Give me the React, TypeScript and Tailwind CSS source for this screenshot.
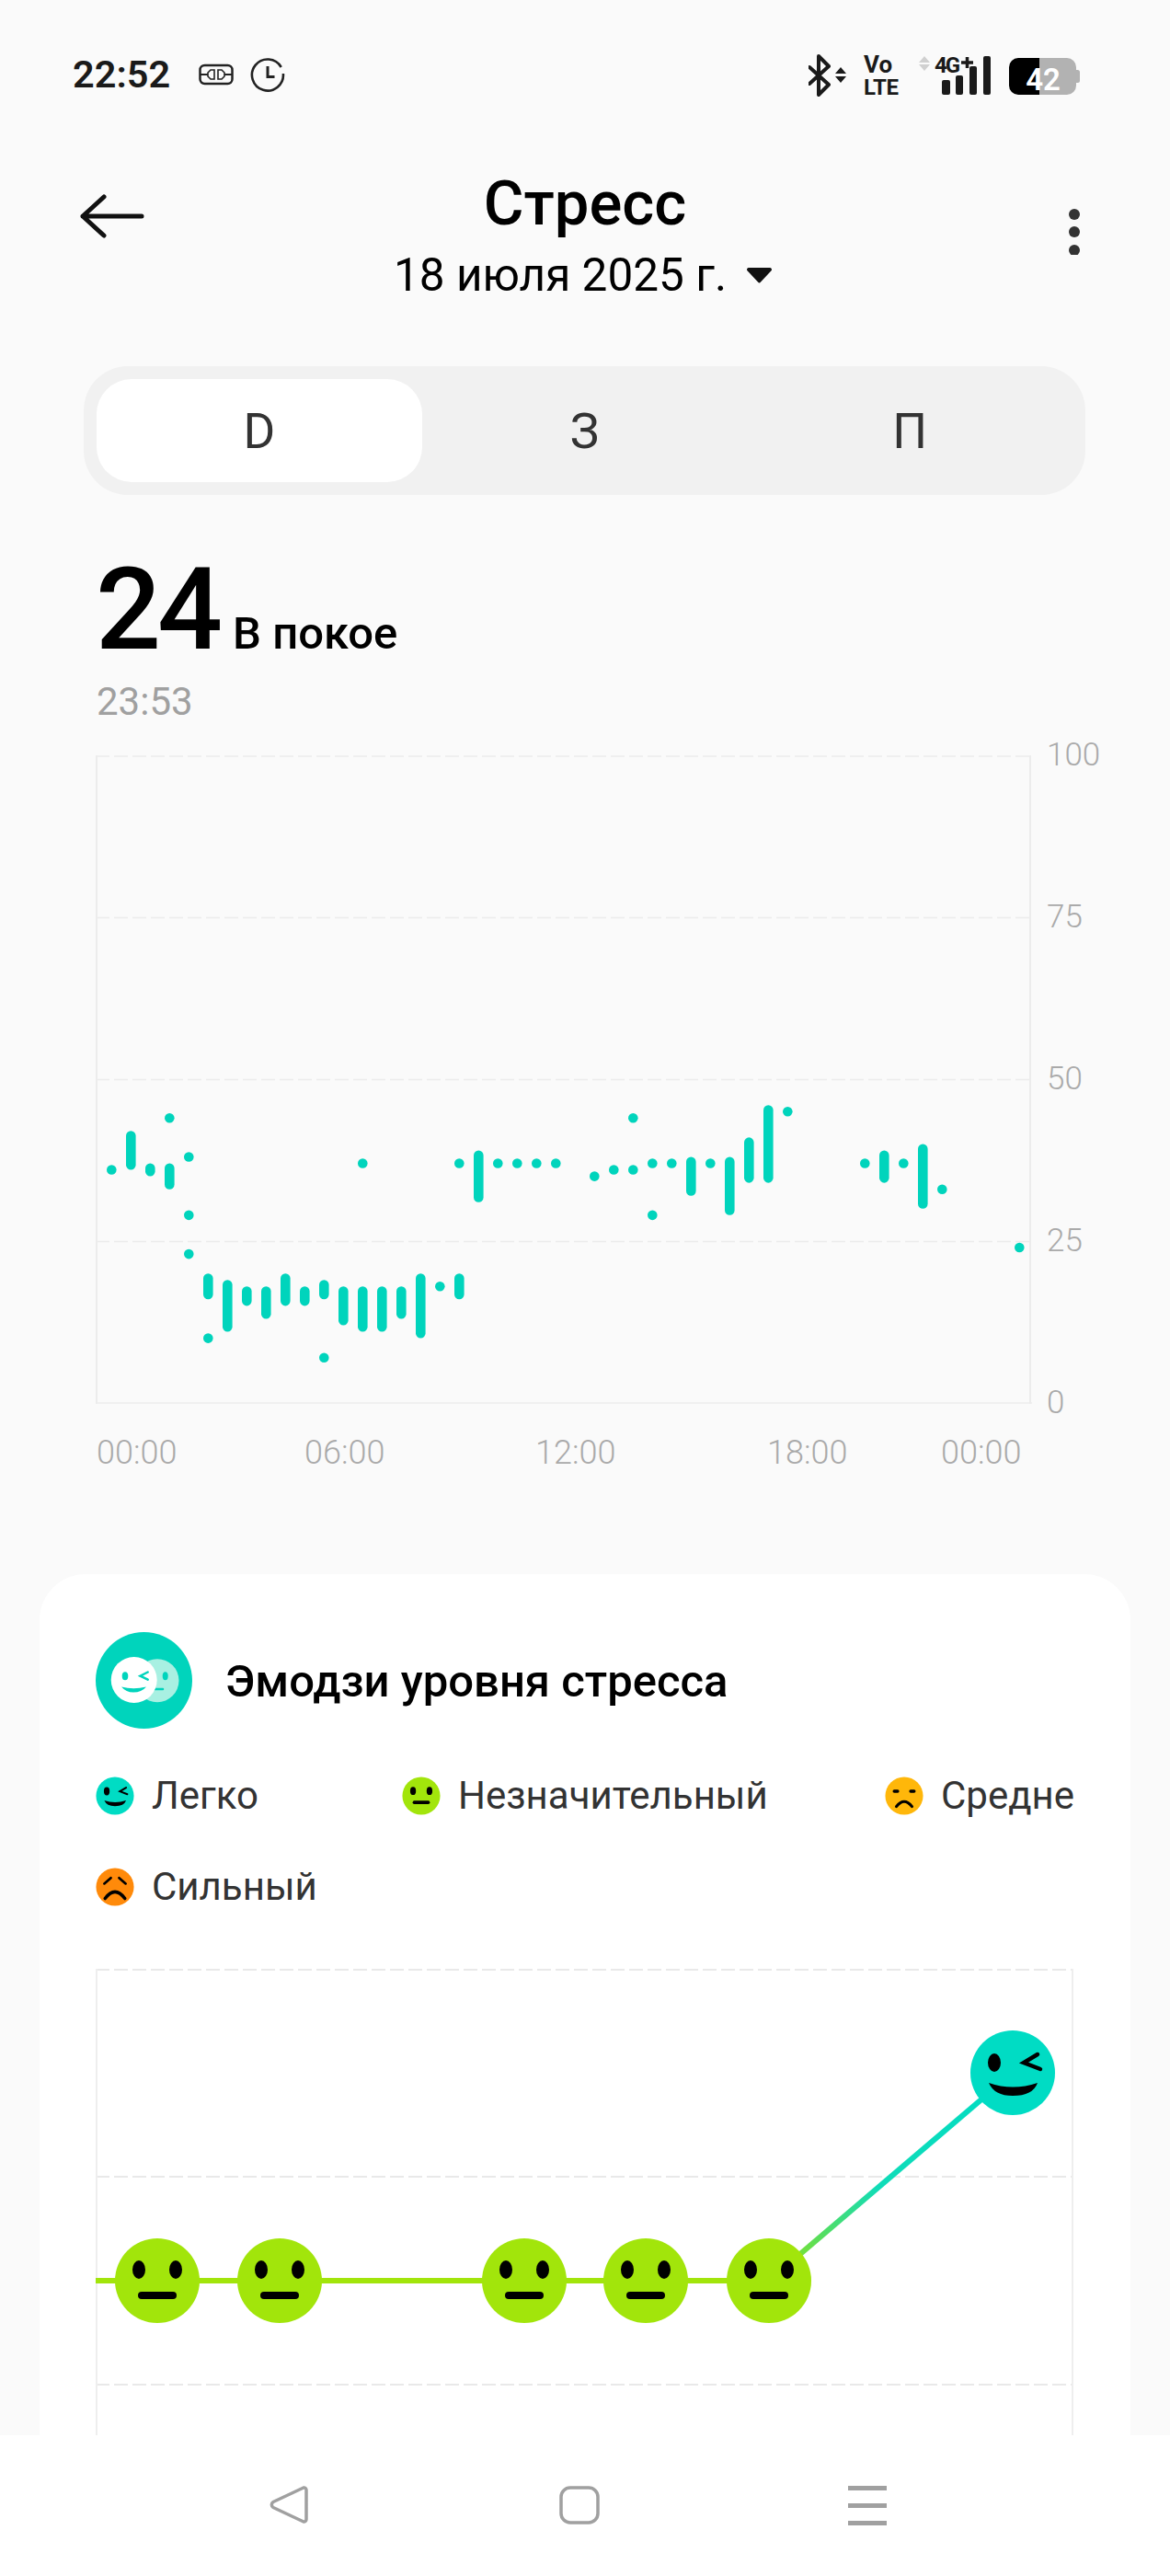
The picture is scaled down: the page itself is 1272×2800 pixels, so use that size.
import React from "react";

const TEAL = "#00d4bc";
const LIME = "#a2e50b";

// half-hour slots: [slot, low, high] draws a bar, low === high a dot
const stressSamples: [number, number, number][] = [
  [0, 36, 36], [1, 36, 42], [2, 35, 37], [3, 33, 37], [3, 44, 44],
  [4, 38, 38], [4, 29, 29], [4, 23, 23], [5, 16, 20], [5, 10, 10],
  [6, 11, 19], [7, 15, 18], [8, 13, 18], [9, 15, 20], [10, 15, 18],
  [11, 16, 19], [11, 7, 7], [12, 12, 18], [13, 11, 18], [13, 37, 37],
  [14, 11, 18], [15, 13, 18], [16, 10, 20], [17, 18, 18], [18, 16, 20],
  [18, 37, 37], [19, 31, 39], [20, 37, 37], [21, 37, 37], [22, 37, 37],
  [23, 37, 37], [25, 35, 35], [26, 36, 36], [27, 36, 36], [27, 44, 44],
  [28, 37, 37], [28, 29, 29], [29, 37, 37], [30, 32, 38], [31, 37, 37],
  [32, 29, 38], [33, 34, 41], [34, 34, 46], [35, 45, 45], [39, 37, 37],
  [40, 34, 39], [41, 37, 37], [42, 30, 40], [43, 33, 33], [47, 24, 24],
];

const valueY = (v: number) => 704 - v * 7.04;
const slotX = (i: number) => 17.3 + i * 21;

function StatusBar() {
  return (
    <div className="flex h-[162px] items-center justify-between pl-[79px] pr-[98px]">
      <div className="flex items-center">
        <span className="w-[137px] text-[41.5px] font-semibold leading-none text-[#1a1a1a]">22:52</span>
        <svg width="96" height="40" viewBox="0 0 96 40" fill="none" stroke="#222">
          {/* power saver plug */}
          <rect x="1.5" y="10" width="35" height="20" rx="5" strokeWidth="2.5" />
          <path d="M2 20h8M28 20h8" strokeWidth="2" />
          <path d="M17 15h-4l-3 3v4l3 3h4zM21 15h4l3 3v4l-3 3h-4z" strokeWidth="1.6" />
          {/* alarm clock */}
          <path d="M91.9 19A17 17 0 1 1 89.700 12" strokeWidth="2.600" />
          <path d="M75 11v11.500h7.500" strokeWidth="3" />
        </svg>
      </div>
      <svg className="mt-[2px]" width="295" height="58" viewBox="0 -8 295 58" fontFamily="Roboto, sans-serif">
        <path d="M1 12l21 19-11 11V0l11 11L1 30" fill="none" stroke="#1a1a1a" strokeWidth="4" strokeLinecap="round" strokeLinejoin="round" />
        <path d="M29 19h12l-6-7zM29 22h12l-6 7z" fill="#1a1a1a" />
        <text x="60" y="18" fontSize="26" fontWeight="700" fill="#1a1a1a">Vo</text>
        <text x="60" y="42" fontSize="24" fontWeight="700" fill="#1a1a1a" textLength="38">LTE</text>
        <path d="M120 7h12l-6-7zM120 9h12l-6 7z" fill="#d0d0d0" />
        <text x="137" y="18" fontSize="24" fontWeight="700" fill="#1a1a1a" textLength="28">4G</text>
        <path d="M166 7h13M172.500 1v12" stroke="#1a1a1a" strokeWidth="3.500" />
        <rect x="145" y="26" width="9" height="16" rx="2" fill="#1a1a1a" />
        <rect x="160" y="21" width="8" height="21" rx="2" fill="#1a1a1a" />
        <rect x="175" y="11" width="8" height="31" rx="2" fill="#1a1a1a" />
        <rect x="190" y="0" width="8" height="42" rx="2" fill="#1a1a1a" />
        {/* battery, filled to 42% */}
        <path d="M228 2h23v40h-23a10 10 0 0 1-10-10V12a10 10 0 0 1 10-10z" fill="#000" />
        <path d="M251 2h30a10 10 0 0 1 10 10v20a10 10 0 0 1-10 10h-30z" fill="#b2b2b2" />
        <path d="M291 15h1.500a2.500 2.500 0 0 1 2.500 2.500v9a2.500 2.500 0 0 1-2.500 2.500H291z" fill="#b2b2b2" />
        <text x="255" y="36.500" fontSize="33" fontWeight="600" fill="#fff" textAnchor="middle">42</text>
      </svg>
    </div>
  );
}

function Header() {
  return (
    <div className="relative pt-[23px] text-center text-black">
      <svg className="absolute left-[86px] top-[49px]" width="72" height="48" viewBox="0 0 72 48" fill="none" stroke="#111" strokeWidth="5" strokeLinecap="round" strokeLinejoin="round">
        <path d="M27 3L4 24l23 21M4 24h64" />
      </svg>
      <svg className="absolute left-[1158px] top-[65px]" width="20" height="50" viewBox="0 0 20 50" fill="#333">
        <circle cx="10" cy="6" r="6" />
        <circle cx="10" cy="25" r="6" />
        <circle cx="10" cy="45" r="6" />
      </svg>
      <h1 className="text-[67px] font-medium leading-[72px]">Стресс</h1>
      <div className="mt-[12px] flex items-center justify-center gap-[22px] pr-[5px] text-[49.5px] leading-[60px]">
        <span>18 июля 2025 г.</span>
        <svg width="27" height="17" viewBox="0 0 27 17" fill="#111">
          <path d="M2 0h23a2 2 0 0 1 1.500 3.300L15 15.600a2 2 0 0 1-3 0L.5 3.300A2 2 0 0 1 2 0z" />
        </svg>
      </div>
    </div>
  );
}

function RangeTabs() {
  return (
    <div className="ml-[91px] mt-[69px] grid h-[140px] w-[1089px] grid-cols-3 rounded-[48px] bg-[#f1f1f1] p-[14px] text-[53px] text-[#333]">
      <div className="flex items-center justify-center rounded-[38px] bg-white pt-[4px]">D</div>
      <div className="flex items-center justify-center pt-[4px]">З</div>
      <div className="flex items-center justify-center pt-[4px]">П</div>
    </div>
  );
}

function StressChart() {
  const gridLines = [1, 176.500, 352.500, 528.500];
  return (
    <div className="ml-[104px] mt-[34px]">
      <div className="flex items-start">
        <svg width="1018" height="706" viewBox="0 0 1018 706" fill="none">
          {gridLines.map((y) => (
            <line key={y} x1="0" x2="1018" y1={y} y2={y} stroke="#ececec" strokeWidth="1.500" strokeDasharray="15 5" />
          ))}
          <line x1="0" x2="1018" y1="704" y2="704" stroke="#ececec" strokeWidth="1.500" />
          <line x1="1" x2="1" y1="0" y2="705" stroke="#ececec" strokeWidth="2" />
          <line x1="1016" x2="1016" y1="0" y2="705" stroke="#ececec" strokeWidth="2" />
          {stressSamples.map(([slot, low, high]) =>
            low === high ? (
              <circle key={`${slot}-${low}`} cx={slotX(slot)} cy={valueY(low)} r="5.300" fill={TEAL} />
            ) : (
              <rect
                key={`${slot}-${low}`}
                x={slotX(slot) - 5.300}
                y={valueY(high)}
                width="10.600"
                height={(high - low) * 7.04}
                rx="5.300"
                fill={TEAL}
              />
            ),
          )}
        </svg>
        <div className="-my-[20px] ml-[16px] flex h-[744px] flex-col justify-between text-[35px] font-light leading-[40px] text-[#aaaaaa]">
          <span>100</span>
          <span>75</span>
          <span>50</span>
          <span>25</span>
          <span>0</span>
        </div>
      </div>
      <div className="mt-[32px] flex pl-[1px] text-[36px] font-light leading-[40px] text-[#aaaaaa]">
        <span className="w-[226px]">00:00</span>
        <span className="w-[251px]">06:00</span>
        <span className="w-[252px]">12:00</span>
        <span className="w-[189px]">18:00</span>
        <span>00:00</span>
      </div>
    </div>
  );
}

function Face({ kind }: { kind: "easy" | "neutral" | "medium" | "strong" }) {
  if (kind === "easy") {
    return (
      <>
        <circle r="46" fill="#00dcc4" />
        <ellipse cx="-20" cy="-11" rx="7" ry="10" fill="#000" />
        <path d="M27-20L12-11l18 7" fill="none" stroke="#000" strokeWidth="4.500" strokeLinecap="round" />
        <path d="M-26 11Q0 20 27 11Q22 25 0 25Q-20 25-26 11z" fill="#000" />
      </>
    );
  }
  if (kind === "neutral") {
    return (
      <>
        <circle r="46" fill={LIME} />
        <ellipse cx="-20" cy="-12" rx="7" ry="10" fill="#000" />
        <ellipse cx="20" cy="-12" rx="7" ry="10" fill="#000" />
        <rect x="-21" y="12" width="42" height="8" rx="4" fill="#000" />
      </>
    );
  }
  if (kind === "medium") {
    return (
      <>
        <circle r="46" fill="#ffb70a" />
        <rect x="-28" y="-15" width="16" height="8" rx="4" fill="#000" />
        <rect x="12" y="-15" width="16" height="8" rx="4" fill="#000" />
        <path d="M-19 26Q0 2 19 26" fill="none" stroke="#000" strokeWidth="7" strokeLinecap="round" />
      </>
    );
  }
  return (
    <>
      <circle r="46" fill="#ff8a0a" />
      <path d="M-10-22L-26-8M10-22L26-8" stroke="#000" strokeWidth="6" strokeLinecap="round" />
      <path d="M-24 28Q0-4 24 28" fill="none" stroke="#000" strokeWidth="8" strokeLinecap="round" />
    </>
  );
}

function LegendItem({ kind, label }: { kind: "easy" | "neutral" | "medium" | "strong"; label: string }) {
  return (
    <div className="flex h-[42px] items-center gap-[19px]">
      <svg width="42" height="42" viewBox="-47 -47 94 94">
        <Face kind={kind} />
      </svg>
      <span className="text-[42px] leading-[42px] text-[#333]">{label}</span>
    </div>
  );
}

function EmojiCard() {
  const neutralSpots = [67, 200, 466, 598, 732];
  return (
    <section className="mx-[43px] mt-[112px] rounded-t-[50px] bg-white pl-[61px] pt-[63px]">
      <div className="flex items-center gap-[36px]">
        <svg width="105" height="105" viewBox="0 0 105 105">
          <circle cx="52.500" cy="52.500" r="52.500" fill={TEAL} />
          <circle cx="67" cy="52.700" r="23.500" fill="#a8f0e2" />
          <ellipse cx="75.700" cy="47.700" rx="3" ry="4.500" fill={TEAL} />
          <path d="M64 62h9" stroke={TEAL} strokeWidth="2.500" strokeLinecap="round" />
          <circle cx="41.700" cy="52" r="25" fill="#fff" />
          <ellipse cx="32" cy="47.700" rx="3.300" ry="4.500" fill={TEAL} />
          <path d="M56.700 43.500L48.500 47.700l8.200 4" fill="none" stroke={TEAL} strokeWidth="2.500" strokeLinecap="round" />
          <path d="M28 59.500Q41 63 55 59.500Q50 65.500 41 65.500Q33 65.500 28 59.500z" fill={TEAL} />
        </svg>
        <h2 className="pt-[2px] text-[49px] font-medium leading-none text-black">Эмодзи уровня стресса</h2>
      </div>

      <div className="mt-[52px] grid grid-cols-[333px_525px_1fr] gap-y-[57px]">
        <LegendItem kind="easy" label="Легко" />
        <LegendItem kind="neutral" label="Незначительный" />
        <LegendItem kind="medium" label="Средне" />
        <LegendItem kind="strong" label="Сильный" />
      </div>

      <svg className="mt-[68px]" width="1064" height="520" viewBox="0 0 1064 520" fill="none">
        <defs>
          <linearGradient id="moodRise" gradientUnits="userSpaceOnUse" x1="732" y1="339" x2="997" y2="113">
            <stop offset="0" stopColor={LIME} />
            <stop offset="0.2" stopColor="#5ade5a" />
            <stop offset="0.45" stopColor="#10dcb8" />
            <stop offset="1" stopColor="#00dcc4" />
          </linearGradient>
        </defs>
        {[1, 226, 452].map((y) => (
          <line key={y} x1="0" x2="1063" y1={y} y2={y} stroke="#e2e2e2" strokeWidth="1.500" strokeDasharray="15 5" />
        ))}
        <line x1="1" x2="1" y1="0" y2="520" stroke="#eeeeee" strokeWidth="2" />
        <line x1="1062" x2="1062" y1="0" y2="520" stroke="#eeeeee" strokeWidth="2" />
        <path d="M0 339H732" stroke={LIME} strokeWidth="6" />
        <path d="M732 339L997 113" stroke="url(#moodRise)" strokeWidth="6" />
        {neutralSpots.map((x) => (
          <g key={x} transform={`translate(${x} 339)`}>
            <Face kind="neutral" />
          </g>
        ))}
        <g transform="translate(997 113)">
          <Face kind="easy" />
        </g>
      </svg>
    </section>
  );
}

function NavBar() {
  return (
    <nav className="relative z-10 flex h-[153px] shrink-0 items-start bg-white pl-[293px] pt-[55px]">
      <svg width="42" height="41" viewBox="0 0 42 41" fill="none" stroke="#a0a0a0" strokeWidth="3.500" strokeLinejoin="round">
        <path d="M37 2a2.500 2.500 0 0 1 3 2.500v32a2.500 2.500 0 0 1-3 2.500L4 23.500a3.500 3.500 0 0 1 0-6z" />
      </svg>
      <svg className="ml-[273px]" width="44" height="42" viewBox="0 0 44 42" fill="none" stroke="#a0a0a0" strokeWidth="3.500">
        <rect x="2" y="2" width="40" height="38" rx="10" />
      </svg>
      <svg className="ml-[269px]" width="44" height="43" viewBox="0 0 44 43" fill="#a0a0a0">
        <rect x="1" y="0" width="42" height="5" />
        <rect x="1" y="19" width="42" height="5" />
        <rect x="1" y="38" width="42" height="5" />
      </svg>
    </nav>
  );
}

export default function App() {
  return (
    <div className="flex h-[2800px] w-[1272px] flex-col overflow-hidden bg-[#fafafa] font-[Roboto,sans-serif]">
      <main className="min-h-0 flex-1 overflow-hidden">
        <StatusBar />
        <Header />
        <RangeTabs />
        <div className="ml-[104px] mt-[62px] flex h-[125px] items-baseline text-black">
          <span className="mr-[15px] text-[125px] font-medium leading-[125px] tracking-[-4px]">24</span>
          <span className="text-[49px] font-medium leading-none">В покое</span>
        </div>
        <p className="ml-[105px] mt-[14px] text-[42px] leading-[48px] text-[#a0a0a0]">23:53</p>
        <StressChart />
        <EmojiCard />
      </main>
      <NavBar />
    </div>
  );
}
